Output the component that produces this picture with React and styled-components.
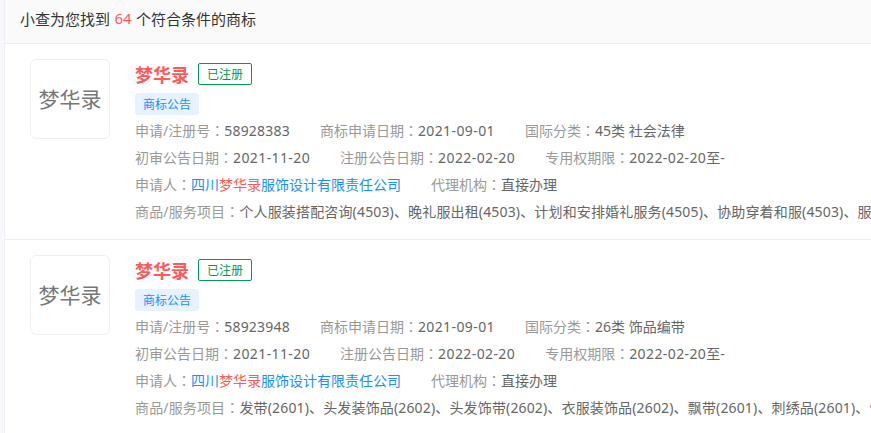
import styled, { createGlobalStyle } from "styled-components";

const GlobalStyle = createGlobalStyle`
    html, body {
        margin: 0;
        padding: 0;
        background: #f7f8fc;
        overflow: hidden;
    }
    body {
        font-family: "Noto Sans", "Noto Sans CJK SC", sans-serif;
    }
`;

const Page = styled.div`
    width: 871px;
    height: 433px;
    overflow: hidden;
    box-sizing: border-box;
    background: #f7f8fc;
    padding-left: 4px;
`;

const Panel = styled.div`
    border-left: 1px solid #f0f0f2;
    background: #fff;
`;

const Header = styled.div`
    height: 44px;
    box-sizing: border-box;
    padding: 0 0 7px 15px;
    display: flex;
    align-items: center;
    background: #fafafa;
    border-bottom: 1px solid #eeeeee;
    font-size: 15px;
    color: #333;
    white-space: pre;
`;

const Count = styled.span`
    color: #ff5a5a;
    margin: 0 0.5px;
`;

const Item = styled.div`
    height: 196px;
    box-sizing: border-box;
    padding: 15px 0 0 25px;
    display: flex;
    gap: 25px;
    border-bottom: 1px solid #eeeeee;
`;

const Logo = styled.div`
    width: 80px;
    height: 80px;
    flex: none;
    box-sizing: border-box;
    padding-bottom: 3px;
    border: 1px solid #efefef;
    border-radius: 6px;
    display: flex;
    align-items: center;
    justify-content: center;
    font-family: "Noto Sans CJK SC", sans-serif;
    font-size: 21px;
    color: #777;
    background: #fff;
`;

const Info = styled.div`
    flex: 1;
    min-width: 0;
    overflow: hidden;
`;

const TitleRow = styled.div`
    display: flex;
    align-items: center;
    gap: 9px;
    height: 30px;
`;

const Title = styled.span`
    font-size: 18px;
    font-weight: 700;
    color: #ff5a5a;
`;

const Status = styled.span`
    width: 54px;
    height: 22px;
    box-sizing: border-box;
    border: 1px solid #009a4e;
    border-radius: 2px;
    color: #009a4e;
    font-size: 12px;
    display: flex;
    align-items: center;
    justify-content: center;
`;

const Notice = styled.div`
    margin-top: 4px;
    width: 64px;
    height: 22px;
    border-radius: 3px;
    background: #e6f2ff;
    color: #1890ff;
    font-size: 12px;
    display: flex;
    align-items: center;
    justify-content: center;
`;

const Rows = styled.div`
    margin-top: 2px;
`;

const Row = styled.div`
    display: flex;
    gap: 30px;
    height: 27px;
    line-height: 27px;
    font-size: 14px;
    white-space: nowrap;
    letter-spacing: ${(props) => (props.$loose ? "0.15px" : "0")};
`;

const Field = styled.span`
    color: #666;
`;

const Label = styled.span`
    color: #999;
`;

/* TC font centers the full-width colon, like the reference */
const Colon = styled.span`
    font-family: "Noto Sans CJK TC", sans-serif;
`;

const RegNo = styled.span`
    letter-spacing: 0.2px;
`;

const DateText = styled.span`
    letter-spacing: 0.4px;
`;

const Company = styled.span`
    color: #1890ff;
`;

const Mark = styled.span`
    color: #ff5a5a;
`;

const records = [
    {
        id: "58928383",
        regNo: "58928383",
        cls: "45类 社会法律",
        goods: "个人服装搭配咨询(4503)、晚礼服出租(4503)、计划和安排婚礼服务(4505)、协助穿着和服(4503)、服装出租(4503)",
    },
    {
        id: "58923948",
        regNo: "58923948",
        cls: "26类 饰品编带",
        goods: "发带(2601)、头发装饰品(2602)、头发饰带(2602)、衣服装饰品(2602)、飘带(2601)、刺绣品(2601)、饰带(2601)",
    },
];

function Name({ children }) {
    return (
        <Label>
            {children}
            <Colon>{"\uFF1A"}</Colon>
        </Label>
    );
}

function Record({ regNo, cls, goods }) {
    return (
        <Item>
            <Logo>梦华录</Logo>
            <Info>
                <TitleRow>
                    <Title>梦华录</Title>
                    <Status>已注册</Status>
                </TitleRow>
                <Notice>商标公告</Notice>
                <Rows>
                    <Row>
                        <Field><Name>申请/注册号</Name><RegNo>{regNo}</RegNo></Field>
                        <Field><Name>商标申请日期</Name><DateText>2021-09-01</DateText></Field>
                        <Field><Name>国际分类</Name>{cls}</Field>
                    </Row>
                    <Row>
                        <Field><Name>初审公告日期</Name><DateText>2021-11-20</DateText></Field>
                        <Field><Name>注册公告日期</Name><DateText>2022-02-20</DateText></Field>
                        <Field><Name>专用权期限</Name><DateText>2022-02-20</DateText>至-</Field>
                    </Row>
                    <Row>
                        <Field>
                            <Name>申请人</Name>
                            <Company>四川<Mark>梦华录</Mark>服饰设计有限责任公司</Company>
                        </Field>
                        <Field><Name>代理机构</Name>直接办理</Field>
                    </Row>
                    <Row $loose>
                        <Field><Name>商品/服务项目</Name>{goods}</Field>
                    </Row>
                </Rows>
            </Info>
        </Item>
    );
}

export default function App() {
    return (
        <Page>
            <GlobalStyle />
            <Panel>
                <Header>
                    小查为您找到 <Count>64</Count> 个符合条件的商标
                </Header>
                {records.map((r) => (
                    <Record key={r.id} {...r} />
                ))}
            </Panel>
        </Page>
    );
}
